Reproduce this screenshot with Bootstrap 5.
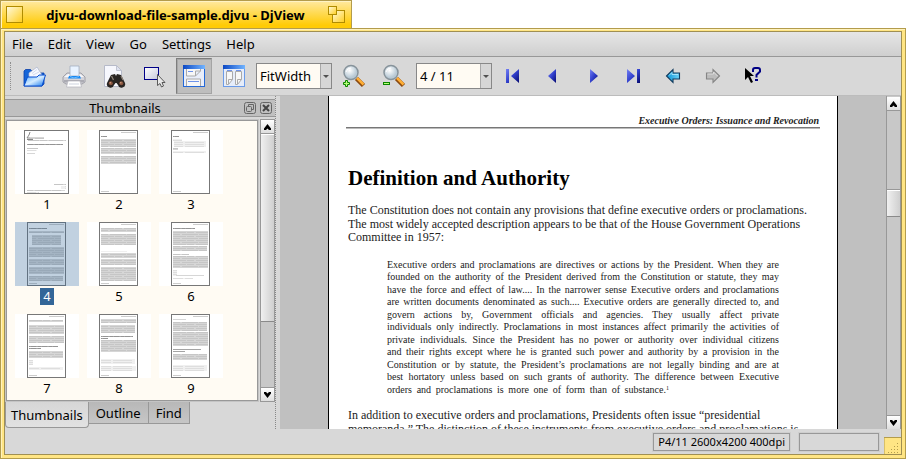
<!DOCTYPE html>
<html lang="en">
<head>
<meta charset="utf-8">
<meta name="viewport" content="width=device-width, initial-scale=1">
<title>djvu-download-file-sample.djvu - DjView</title>
<link href="https://cdn.jsdelivr.net/npm/bootstrap@5.3.0/dist/css/bootstrap.min.css" rel="stylesheet">
<style>
  :root { --face: #d8d8d8; --line: #989898; --dock: #c0c0c0; --cream: #fffbf3; }
  body { font-family: "Noto Sans", "Open Sans", sans-serif; font-size: 12px; line-height: 16px; color: #000; background: #fff; }
  button { color: inherit; }

  .title-tab { width: 352px; height: 28px; padding: 0 6px 0 5px; background: linear-gradient(#ffe9a0, #ffcb05 90%); border: 1px solid #b39c4c; border-bottom: 0; box-shadow: inset 1px 1px #fff3c4; }
  .title-tab h1 { font-size: 13px; line-height: 20px; font-weight: 700; }
  .tab-btn { padding: 0; border: 0; background: none; line-height: 0; }

  .frame { background: #ffe584; border: 1px solid #b39c4c; padding: 2px 3px 3px; box-shadow: inset 1px 1px #fff2bd; }
  .client { background: var(--face); border: 1px solid #a08f52; min-height: 0; }

  .menu-strip { height: 25px; padding: 0 2px; background: linear-gradient(#e6e6e6, #cfcfcf); border-bottom: 1px solid var(--line); }
  .menu-strip .nav-link { padding: 0 5px; margin-right: 5px; font-size: 13px; line-height: 24px; color: #000; }

  .tools { height: 39px; padding: 0 5px; gap: 4px; border-bottom: 1px solid #bcbcbc; }
  .grip { width: 1px; height: 28px; margin-right: 1px; border-left: 1px dotted #8e8e8e; }
  .tool { width: 36px; height: 36px; padding: 0; border: 1px solid transparent; background: none; display: flex; align-items: center; justify-content: center; flex: none; }
  .tool.pressed { background: #bebebe; border-color: #7e7e7e #a4a4a4 #a4a4a4 #7e7e7e; box-shadow: inset 1px 1px #a8a8a8; }
  .combo { flex: none; width: 76px; height: 26px; padding: 0 12px 0 3px; border: 1px solid #888; border-radius: 0; font-size: 13px; line-height: 22px; color: #000; background-color: var(--cream); background-size: 11px 24px; background-position: right center;
    background-image: url("data:image/svg+xml,%3Csvg xmlns='http://www.w3.org/2000/svg' viewBox='0 0 11 24'%3E%3Crect width='11' height='24' fill='%23d6d6d6'/%3E%3Cpath d='M.5 0v24' stroke='%23a8a8a8'/%3E%3Cpath d='M3 11h6l-3 3z' fill='%23505050'/%3E%3C/svg%3E"); }

  .side { width: 270px; flex: none; padding-top: 3px; }
  .dock-head { height: 18px; padding: 0 3px 0 5px; gap: 4px; background: var(--dock); border-top: 1px solid var(--line); border-bottom: 1px solid var(--line); }
  .dock-head h2 { font-size: 13px; line-height: 16px; font-weight: 400; }
  .mini { padding: 0; border: 0; background: none; line-height: 0; }
  .thumb-pane { margin: 3px 2px 1px 1px; padding: 9px 8px 0; background: var(--cream); border: 1px solid var(--line); box-shadow: 0 0 0 1px #c4c4c4; }
  .thumbs { display: grid; grid-template-columns: repeat(3, 64px); column-gap: 8px; }
  .thumb { height: 92px; padding: 0; border: 0; background: none; font-size: 13px; line-height: 17px; display: flex; flex-direction: column; align-items: center; }
  .thumb svg { display: block; background: #fff; margin-bottom: 2px; }
  .thumb span { padding: 0 3px; }
  .thumb.current span { background: #336698; color: #fff; }

  .vbar { width: 15px; flex: none; background: #c8c8c8; border-left: 1px solid var(--line); border-right: 1px solid var(--line); display: flex; flex-direction: column; }
  .vbar button { height: 14px; padding: 0; border: 0; border-bottom: 1px solid var(--line); background: linear-gradient(#fff, #dedede); line-height: 0; flex: none; }
  .vbar button:last-child { border-top: 1px solid var(--line); border-bottom: 0; }
  .knob { background: linear-gradient(90deg, #f0f0f0, #cfcfcf); border-top: 1px solid #fff; border-bottom: 1px solid #8a8a8a; flex: none; }
  .side .vbar { margin-top: 2px; border-top: 1px solid var(--line); border-bottom: 1px solid var(--line); }
  .side .knob { height: 188px; }
  .gap-top { height: 79px; flex: none; border-bottom: 1px solid var(--line); }
  .view-bar { padding-top: 1px; }
  .view-bar .knob { height: 27px; }

  .dock-tabs { padding-bottom: 1px; }
  .dock-tabs button { height: 22px; padding: 0 7px; border: 1px solid var(--line); border-top: 0; border-left: 0; background: linear-gradient(#b8b8b8, #c6c6c6); font-size: 13px; line-height: 20px; }
  .dock-tabs button.active { height: 26px; padding: 0 5px; border-left: 1px solid var(--line); border-radius: 0 0 4px 4px; background: linear-gradient(#d6d6d6, #e2e2e2); line-height: 24px; }
  .splitter { width: 5px; flex: none; border-left: 1px dotted #888; }

  .viewer { background: var(--dock); padding: 0 48px; min-width: 0; overflow: hidden; }
  .sheet { background: #fff; border: 1px solid #000; border-width: 0 1px; padding: 19px 17px 0; font-family: "Liberation Serif", serif; color: #222; height: 100%; overflow: hidden; }
  .run-head { font-size: 10px; line-height: 12px; text-align: right; font-weight: 700; font-style: italic; padding-right: 1px; border-bottom: 1px solid #777; box-shadow: 0 1px #bbb; }
  .sheet h3 { font-size: 21px; line-height: 26px; font-weight: 700; color: #000; margin: 37px 2px 13px; white-space: nowrap; }
  .sheet p { margin: 0 0 0 2px; font-size: 12px; line-height: 1.125; white-space: nowrap; }
  .sheet blockquote { margin: 14px 41px 13px; font-size: 10px; line-height: 1.25; white-space: nowrap; }
  .sheet blockquote span { display: block; text-align: justify; text-align-last: justify; }
  .sheet blockquote span:last-child { margin-right: 110px; }
  .sheet sup { font-size: 6px; line-height: 0; }

  .status { height: 25px; flex: none; gap: 9px; padding-left: 8px; }
  .status-cell { height: 18px; border: 1px solid var(--line); box-shadow: 0 0 0 1px #cecece; font-size: 11px; line-height: 16px; padding: 0 4px; }
  .status-cell.blank { width: 80px; margin-right: -4px; }
</style>
</head>
<body class="vh-100 d-flex flex-column overflow-hidden">

<header class="title-tab d-flex align-items-center flex-shrink-0">
  <button class="tab-btn" aria-label="Close"><svg width="17" height="17" viewBox="0 0 17 17"><defs><linearGradient id="gold" x1="0" y1="0" x2="1" y2="1"><stop offset="0" stop-color="#fffbe0"/><stop offset="1" stop-color="#ffcd1c"/></linearGradient></defs><rect x=".5" y=".5" width="16" height="16" fill="url(#gold)" stroke="#b08c00"/></svg></button>
  <h1 class="m-0 flex-grow-1 text-center text-nowrap">djvu-download-file-sample.djvu - DjView</h1>
  <button class="tab-btn" aria-label="Zoom"><svg width="17" height="17" viewBox="0 0 17 17"><rect x="4.500" y="4.500" width="12" height="12" fill="url(#gold)" stroke="#b08c00"/><rect x=".5" y=".5" width="8" height="8" fill="url(#gold)" stroke="#b08c00"/></svg></button>
</header>

<div class="frame d-flex flex-column flex-grow-1 overflow-hidden">
<div class="client d-flex flex-column flex-grow-1 overflow-hidden">
  <nav class="menu-strip nav flex-nowrap flex-shrink-0">
    <a class="nav-link" href="#">File</a><a class="nav-link" href="#">Edit</a><a class="nav-link" href="#">View</a><a class="nav-link" href="#">Go</a><a class="nav-link" href="#">Settings</a><a class="nav-link" href="#">Help</a>
  </nav>

  <div class="tools d-flex align-items-center flex-shrink-0" role="toolbar" aria-label="Main">
    <div class="grip"></div>
    <button class="tool" aria-label="Open"><svg width="24" height="24" viewBox="0 0 24 24"><defs><linearGradient id="blue" x1="0" y1="0" x2="1" y2="1"><stop offset="0" stop-color="#4aa8ff"/><stop offset=".5" stop-color="#d4ebff"/><stop offset="1" stop-color="#1479f0"/></linearGradient></defs><path d="M2 22V7l1.500-1.500h5L10 7v2h12v11l-2 2z" fill="#1565d8" stroke="#0b3fa8" stroke-width=".8"/><path d="M7 9l8-6 5 8-3 3H7z" fill="#f6f8ff" stroke="#a9b3cc" stroke-width=".7"/><path d="M10 9.500l5-4M11 11l6-3" stroke="#ccd3e6" stroke-width=".8"/><path d="M5.500 13H15l2-2h6.500L20 22H2z" fill="url(#blue)" stroke="#0a4fd0"/></svg></button>
    <button class="tool" aria-label="Print"><svg width="24" height="24" viewBox="0 0 24 24"><path d="M5 9h14l4 4v5l-3 2H4l-3-2v-5z" fill="#d4d4da" stroke="#93939c" stroke-width=".8"/><path d="M2 13l4-3h12l4 3z" fill="#f7f7fa"/><path d="M8 2h9v10H8z" fill="#e9f3ff" stroke="#a3aec0" stroke-width=".8"/><path d="M7 12h11l1 2.500H6z" fill="#1687f2"/><path d="M8 12.500l4 1.500 5-1.500" stroke="#70bdff" fill="none"/><path d="M2 16h20v2.500H2z" fill="#ababb3"/><path d="M6 17h12l1.500 6h-15z" fill="#fff" stroke="#b3b3bb" stroke-width=".7"/><path d="M7 20h10" stroke="#cdd3df"/></svg></button>
    <button class="tool" aria-label="Find"><svg width="24" height="24" viewBox="0 0 24 24"><path d="M2.500 1.500h12l5 5v16h-17z" fill="#f6f7fd" stroke="#b6bac9"/><path d="M14.500 1.500v5h5z" fill="#dfe3f0" stroke="#b6bac9" stroke-width=".8"/><path d="M9 11l4-1 1 2 1-2 4 1 4 8a3.500 3.500 0 0 1-7 2l-1.500-2h-1L12 21a3.500 3.500 0 0 1-7-2z" fill="#292522"/><path d="M9.500 12l2 4M19 12l2 4" stroke="#8b8178" stroke-width="1.300"/><circle cx="8.800" cy="19.200" r="2" fill="#87543e"/><circle cx="19.300" cy="19.200" r="2" fill="#87543e"/><circle cx="8.300" cy="18.800" r=".8" fill="#d89f82"/><circle cx="18.800" cy="18.800" r=".8" fill="#d89f82"/></svg></button>
    <button class="tool" aria-label="Select"><svg width="24" height="24" viewBox="0 0 24 24"><defs><linearGradient id="pale" x1="0" y1="0" x2="1" y2="1"><stop offset="0" stop-color="#fff"/><stop offset="1" stop-color="#c4c6dc"/></linearGradient></defs><rect x="2.500" y="3.500" width="14" height="12" fill="url(#pale)" stroke="#000088"/><path d="M15.500 10.500v11l2.500-2 1.500 3.500 2-1-1.500-3.500h3z" fill="#e9e9e9" stroke="#4b4b4b" stroke-width=".9"/></svg></button>
    <button class="tool pressed" aria-label="Continuous" aria-pressed="true"><svg width="24" height="24" viewBox="0 0 24 24"><defs><linearGradient id="bar" x1="0" x2="1"><stop offset="0" stop-color="#0c48c4"/><stop offset="1" stop-color="#72b4ff"/></linearGradient></defs><rect x="1.500" y="1.500" width="21" height="21" fill="#e9eefa" stroke="#2368d8"/><path d="M1 1h22v4H1z" fill="url(#bar)"/><path d="M4.500 5v7h9l5-5V5M13.500 12V7h5M4.500 22v-7h14v7" fill="#f7f7f7" stroke="#aaa"/><path d="M6 7.500h5M6 17.500h11" stroke="#6f93ea"/></svg></button>
    <button class="tool" aria-label="Side by side"><svg width="24" height="24" viewBox="0 0 24 24"><rect x="1.500" y="1.500" width="21" height="21" fill="#e6edfa" stroke="#6b9be8"/><path d="M1 1h22v4H1z" fill="url(#bar)"/><path d="M4.500 7.500h6v8l-4 5h-2zM13.500 7.500h6v8l-4 5h-2zM6.500 20v-4.500h4M15.500 20v-4.500h4" fill="#f7f7f7" stroke="#aaa"/><path d="M5 6.500h5M14 6.500h5" stroke="#6f93ea"/></svg></button>
    <select class="form-select combo" aria-label="Zoom"><option>FitWidth</option></select>
    <button class="tool" aria-label="Zoom in"><svg width="24" height="24" viewBox="0 0 24 24"><defs><radialGradient id="lens" cx=".4" cy=".35"><stop offset="0" stop-color="#fff"/><stop offset="1" stop-color="#b9cad6"/></radialGradient></defs><path d="M14.500 14.500l7 7" stroke="#8a4a10" stroke-width="4.500"/><path d="M15 14l6.500 6.500" stroke="#ffae35" stroke-width="2.500"/><circle cx="9" cy="8.500" r="7" fill="url(#lens)" stroke="#87939b" stroke-width="1.500"/><path d="M4 8q1-4 5-4" stroke="#fff" fill="none"/><path d="M3.500 16.500h2v2h2v2h-2v2h-2v-2h-2v-2h2z" fill="#b8ff78" stroke="#0c8700"/></svg></button>
    <button class="tool" aria-label="Zoom out"><svg width="24" height="24" viewBox="0 0 24 24"><path d="M14.500 14.500l7 7" stroke="#8a4a10" stroke-width="4.500"/><path d="M15 14l6.500 6.500" stroke="#ffae35" stroke-width="2.500"/><circle cx="9" cy="8.500" r="7" fill="url(#lens)" stroke="#87939b" stroke-width="1.500"/><path d="M4 8q1-4 5-4" stroke="#fff" fill="none"/><rect x="1.500" y="18.500" width="6" height="2" fill="#b8ff78" stroke="#0c8700"/></svg></button>
    <select class="form-select combo" aria-label="Page"><option>4 / 11</option></select>
    <button class="tool" aria-label="First page"><svg width="24" height="24" viewBox="0 0 24 24"><defs><linearGradient id="navy" x1="0" y1="0" x2="1" y2="1"><stop offset="0" stop-color="#7480f4"/><stop offset=".5" stop-color="#3140cc"/><stop offset="1" stop-color="#060a70"/></linearGradient></defs><path d="M4 5h3v14H4zM17 5v14L9 12z" fill="url(#navy)"/></svg></button>
    <button class="tool" aria-label="Previous page"><svg width="24" height="24" viewBox="0 0 24 24"><path d="M14 5v14l-8-7z" fill="url(#navy)"/></svg></button>
    <button class="tool" aria-label="Next page"><svg width="24" height="24" viewBox="0 0 24 24"><path d="M8 5v14l8-7z" fill="url(#navy)"/></svg></button>
    <button class="tool" aria-label="Last page"><svg width="24" height="24" viewBox="0 0 24 24"><path d="M5 5v14l8-7zM15 5h3v14h-3z" fill="url(#navy)"/></svg></button>
    <button class="tool" aria-label="Back"><svg width="24" height="24" viewBox="0 0 24 24"><defs><linearGradient id="sea" x1="0" y1="0" x2="1" y2="0"><stop offset="0" stop-color="#0a93d6"/><stop offset="1" stop-color="#6fd2f8"/></linearGradient></defs><path d="M4.500 12L11 5.500V9h6.500v6H11v3.500z" fill="url(#sea)" stroke="#123a5c" stroke-width="1.100"/><path d="M7 11.500l3-3v2h6" stroke="#b8ecff" fill="none" stroke-width=".8"/></svg></button>
    <button class="tool" aria-label="Forward"><svg width="24" height="24" viewBox="0 0 24 24"><path d="M17.500 12L11 5.500V9H4.500v6H11v3.500z" fill="#bcbcbc" stroke="#858585" stroke-width="1.100"/><path d="M5.500 10h6V8l4 4" stroke="#e4e4e4" fill="none" stroke-width=".8"/></svg></button>
    <button class="tool" aria-label="What's this"><svg width="24" height="24" viewBox="0 0 24 24"><path d="M3 4v12l3-3 3 6 2-1-3-6h4z" fill="#000"/><path d="M11 8V6q0-2 2-2h3q2 0 2 2v1.500L14.500 11v2.500M13 16h3" fill="none" stroke="#000084" stroke-width="2"/></svg></button>
  </div>

  <main class="d-flex flex-grow-1 overflow-hidden">
    <section class="side d-flex flex-column" aria-label="Thumbnails">
      <div class="dock-head d-flex align-items-center">
        <h2 class="m-0 flex-grow-1 text-center">Thumbnails</h2>
        <button class="mini" aria-label="Float"><svg width="12" height="12" viewBox="0 0 12 12" fill="none" stroke="#666"><rect x=".5" y=".5" width="11" height="11" rx="2"/><rect x="2.500" y="4.500" width="5" height="5" rx="1"/><path d="M4.500 4.500v-2h5v5h-2"/></svg></button>
        <button class="mini" aria-label="Close"><svg width="12" height="12" viewBox="0 0 12 12" fill="none" stroke="#666"><rect x=".5" y=".5" width="11" height="11" rx="2"/><path d="M3 3l6 6M9 3l-6 6" stroke="#444" stroke-width="2"/></svg></button>
      </div>
      <div class="d-flex flex-grow-1 overflow-hidden">
        <div class="thumb-pane flex-grow-1 overflow-hidden"><div class="thumbs" id="thumbs"></div></div>
        <div class="vbar">
          <button aria-label="Scroll up"><svg width="7" height="6" viewBox="0 0 7 6"><path d="M0 4.500L3.500 0 7 4.500V6H5L3.500 4.500 2 6H0z"/></svg></button>
          <div class="knob"></div><div class="flex-grow-1"></div>
          <button aria-label="Scroll down"><svg width="7" height="6" viewBox="0 0 7 6"><path d="M0 1.500L3.500 6 7 1.500V0H5L3.500 1.500 2 0H0z"/></svg></button>
        </div>
      </div>
      <div class="dock-tabs d-flex align-items-start" role="tablist">
        <button class="active" role="tab" aria-selected="true">Thumbnails</button><button role="tab">Outline</button><button role="tab">Find</button>
      </div>
    </section>
    <div class="splitter"></div>

    <div class="viewer flex-grow-1">
      <article class="sheet">
        <div class="run-head">Executive Orders: Issuance and Revocation</div>
        <h3>Definition and Authority</h3>
        <p>The Constitution does not contain any provisions that define executive orders or proclamations.<br>The most widely accepted description appears to be that of the House Government Operations<br>Committee in 1957:</p>
        <blockquote>
          <span>Executive orders and proclamations are directives or actions by the President. When they are</span>
          <span>founded on the authority of the President derived from the Constitution or statute, they may</span>
          <span>have the force and effect of law.... In the narrower sense Executive orders and proclamations</span>
          <span>are written documents denominated as such.... Executive orders are generally directed to, and</span>
          <span>govern actions by, Government officials and agencies. They usually affect private</span>
          <span>individuals only indirectly. Proclamations in most instances affect primarily the activities of</span>
          <span>private individuals. Since the President has no power or authority over individual citizens</span>
          <span>and their rights except where he is granted such power and authority by a provision in the</span>
          <span>Constitution or by statute, the President’s proclamations are not legally binding and are at</span>
          <span>best hortatory unless based on such grants of authority. The difference between Executive</span>
          <span>orders and proclamations is more one of form than of substance.<sup>1</sup></span>
        </blockquote>
        <p>In addition to executive orders and proclamations, Presidents often issue “presidential<br>memoranda.” The distinction of these instruments from executive orders and proclamations is</p>
      </article>
    </div>
    <div class="vbar view-bar">
      <button aria-label="Scroll up"><svg width="7" height="6" viewBox="0 0 7 6"><path d="M0 4.500L3.500 0 7 4.500V6H5L3.500 4.500 2 6H0z"/></svg></button>
      <div class="gap-top"></div><div class="knob"></div><div class="flex-grow-1"></div>
      <button aria-label="Scroll down"><svg width="7" height="6" viewBox="0 0 7 6"><path d="M0 1.500L3.500 6 7 1.500V0H5L3.500 1.500 2 0H0z"/></svg></button>
    </div>
  </main>

  <footer class="status d-flex align-items-center justify-content-end">
    <div class="status-cell">P4/11 2600x4200 400dpi</div>
    <div class="status-cell blank"></div>
    <svg class="align-self-end" width="17" height="17" viewBox="0 0 17 17"><path d="M0 0h17v17H0z" fill="#ffe584"/><path d="M0 17V.5h17" fill="none" stroke="#b39c4c"/><g fill="#b39c4c"><path d="M13 6h1v1h-1zM13 9h1v1h-1zM13 12h1v1h-1zM13 15h1v1h-1zM10 9h1v1h-1zM10 12h1v1h-1zM10 15h1v1h-1zM7 12h1v1H7zM7 15h1v1H7zM4 15h1v1H4z"/></g></svg>
  </footer>
</div>
</div>

<svg width="0" height="0" class="position-absolute" aria-hidden="true"><defs>
  <pattern id="lines" width="41" height="4" patternUnits="userSpaceOnUse"><path d="M0 0h41v4H0z" fill="#d6d6d6"/><path d="M0 .5h9m2 0h16m1 0h9M0 2.500h15m1 0h7m2 0h14" stroke="#c6c6c6"/></pattern>
  <pattern id="faint" width="41" height="2" patternUnits="userSpaceOnUse"><path d="M0 0h41v2H0z" fill="#f0f0f0"/><path d="M0 .5h12m2 0h19" stroke="#dedede"/></pattern>
  <pattern id="heavy" width="11" height="2" patternUnits="userSpaceOnUse"><path d="M0 0h11v2H0z" fill="#a4a4a4"/><path d="M0 .5h3m1 0h5" stroke="#949494"/></pattern>
</defs></svg>
<script>
  // Text blocks of each page miniature: [x, y, width, height, tone]
  const pages = [
    [[6,7,14,2,'lines'],[4,10,38,1,'lines'],[3,14,36,1,'heavy'],[3,18,11,1,'lines'],[3,20,10,1,'faint'],[3,23,8,1,'lines'],[30,54,12,1,'lines'],[37,56,5,3,'faint'],[3,60,38,1,'lines'],[3,62,12,1,'faint']],
    [[2,6,6,1,'heavy'],[2,9,35,8,'lines'],[2,18,35,6,'lines'],[2,26,35,8,'lines']],
    [[2,6,6,1,'heavy'],[2,9,9,2,'faint'],[3,11,32,6,'faint'],[2,18,5,2,'lines'],[2,21,33,2,'faint']],
    [[2,6,18,1,'heavy'],[2,9,35,2,'lines'],[5,13,29,10,'lines'],[2,25,35,10,'lines'],[2,37,35,6,'lines'],[2,45,35,7,'lines'],[2,54,34,5,'lines']],
    [[2,6,35,4,'lines'],[2,12,35,11,'lines'],[2,29,26,1,'faint'],[2,31,35,5,'lines'],[2,37,35,6,'lines'],[2,45,35,14,'lines']],
    [[2,6,22,1,'heavy'],[2,9,35,14,'lines'],[2,24,34,5,'lines'],[2,32,16,1,'lines'],[2,34,35,12,'lines'],[2,48,4,6,'faint'],[5,53,28,1,'lines'],[2,56,20,1,'faint']],
    [[2,6,34,2,'lines'],[2,11,35,9,'lines'],[2,22,35,7,'lines'],[2,32,29,1,'heavy'],[2,34,12,1,'heavy'],[2,37,34,7,'lines'],[2,46,4,5,'faint'],[2,53,34,3,'faint']],
    [[2,5,35,4,'lines'],[2,11,34,8,'lines'],[2,22,32,1,'heavy'],[2,24,7,1,'heavy'],[2,26,35,12,'lines'],[2,45,34,5,'faint'],[2,52,35,5,'faint']],
    [[2,5,13,1,'lines'],[2,8,34,9,'lines'],[2,18,35,14,'lines'],[2,35,28,1,'heavy'],[2,37,12,1,'heavy'],[2,40,34,6,'lines'],[2,51,34,6,'faint']]
  ];
  document.getElementById('thumbs').innerHTML = pages.map((blocks, i) => {
    const wide = i === 0, w = wide ? 45 : 39, x = wide ? 9 : 12, on = i === 3;
    const head = wide ? '<path d="M6 2L5 5l-2 3h5M3 9.500h6" fill="none" stroke="#888"/>' : '<path d="M22 2.500h15M2 61.500h8" stroke="#ccc"/>';
    const body = blocks.map(b => `<rect x="${b[0]}" y="${b[1]}" width="${b[2]}" height="${b[3]}" fill="url(#${b[4]})"/>`).join('');
    return `<button class="thumb${on ? ' current' : ''}"><svg width="64" height="64" viewBox="0 0 64 64"><g transform="translate(${x} 0)"><rect x=".5" y=".5" width="${w - 1}" height="63" fill="#fff" stroke="#777"/>${head}${body}</g>${on ? '<rect width="64" height="64" fill="#336698" opacity=".3"/>' : ''}</svg><span>${i + 1}</span></button>`;
  }).join('');
</script>
<script src="https://cdn.jsdelivr.net/npm/bootstrap@5.3.0/dist/js/bootstrap.bundle.min.js"></script>
</body>
</html>
